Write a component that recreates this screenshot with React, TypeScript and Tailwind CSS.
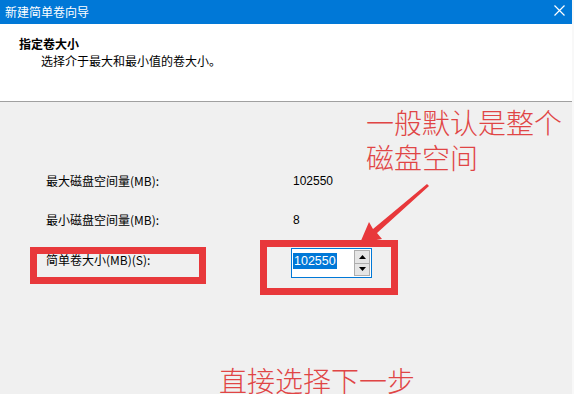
import React from "react";

const font = { fontFamily: '"Noto Sans CJK SC", "Liberation Sans", sans-serif' };

export default function App() {
    return (
        <div className="relative w-[574px] h-[394px] overflow-hidden bg-[#f0f0f0] text-black" style={font}>
            <div className="flex flex-col w-[572px] h-full">
                {/* Title bar */}
                <div className="flex items-center justify-between h-[24px] bg-[#0078d7] pl-[5px] pr-[7px] text-white text-[12px]">
                    <span>新建简单卷向导</span>
                    <svg width="11" height="11" viewBox="0 0 11 11" className="mb-[3px]">
                        <path d="M0.5 0.5 L10.5 10.5 M10.5 0.5 L0.5 10.5" stroke="#ffffff" strokeWidth="1.2" />
                    </svg>
                </div>

                {/* Header */}
                <div className="h-[78px] bg-white border-b border-[#a0a0a0] pt-[11px] pl-[19px] text-[12px] leading-[17px]">
                    <div className="font-bold">指定卷大小</div>
                    <div className="pl-[22px]">选择介于最大和最小值的卷大小。</div>
                </div>

                {/* Body */}
                <div className="flex-1 pt-[67px] pl-[46px] text-[12px] leading-[16px]">
                    <div className="flex items-center h-[24px]">
                        <span className="w-[247px]">最大磁盘空间量(MB):</span>
                        <span style={{ fontFamily: '"Liberation Sans", sans-serif' }}>102550</span>
                    </div>
                    <div className="flex items-center h-[24px] mt-[15px]">
                        <span className="w-[247px]">最小磁盘空间量(MB):</span>
                        <span style={{ fontFamily: '"Liberation Sans", sans-serif' }}>8</span>
                    </div>
                    <div className="flex items-start mt-[16px]">
                        <span className="w-[245px] pt-[4px]">简单卷大小(MB)(S):</span>
                        <div className="flex h-[30px] w-[81px] bg-white border border-[#0078d7]">
                            <div className="flex-1 pl-[1px] pt-[3px]">
                                <span
                                    className="inline-block bg-[#0078d7] text-white px-[1px] leading-[16px] text-[12.5px]"
                                    style={{ fontFamily: '"Liberation Sans", sans-serif' }}
                                >
                                    102550
                                </span>
                            </div>
                            <div className="flex flex-col w-[16px] my-[1px] mr-[1px]">
                                <div className="flex-1 flex items-center justify-center bg-[#e5e5e5] border border-[#adadad]">
                                    <svg width="7" height="4" viewBox="0 0 7 4"><path d="M3.5 0 L7 4 L0 4 Z" fill="#000" /></svg>
                                </div>
                                <div className="flex-1 flex items-center justify-center bg-[#e5e5e5] border border-t-0 border-[#adadad]">
                                    <svg width="7" height="4" viewBox="0 0 7 4"><path d="M0 0 L7 0 L3.5 4 Z" fill="#000" /></svg>
                                </div>
                            </div>
                        </div>
                    </div>
                </div>
            </div>
            <div className="absolute right-0 top-0 w-[2px] h-full bg-[#f8f8f8]" />

            {/* Annotation overlays */}
            <div className="absolute left-[30px] top-[247px] w-[176px] h-[37px] border-[7px] border-[#e8383b]" />
            <div className="absolute left-[260px] top-[240px] w-[138px] h-[55px] border-[7px] border-[#e8383b]" />

            <svg className="absolute left-0 top-0" width="574" height="394">
                <polygon points="429,186 377,233 382,239 360,243 369,222 373,229 427,184" fill="#e8383b" />
            </svg>

            <div className="absolute left-[366px] top-[108px] flex flex-col gap-[7px] text-[28px] leading-[28px] text-[#e04545] font-light">
                <div>一般默认是整个</div>
                <div>磁盘空间</div>
            </div>
            <div className="absolute left-[219px] top-[366px] text-[28px] leading-[28px] text-[#e04545] font-light">
                直接选择下一步
            </div>
        </div>
    );
}
